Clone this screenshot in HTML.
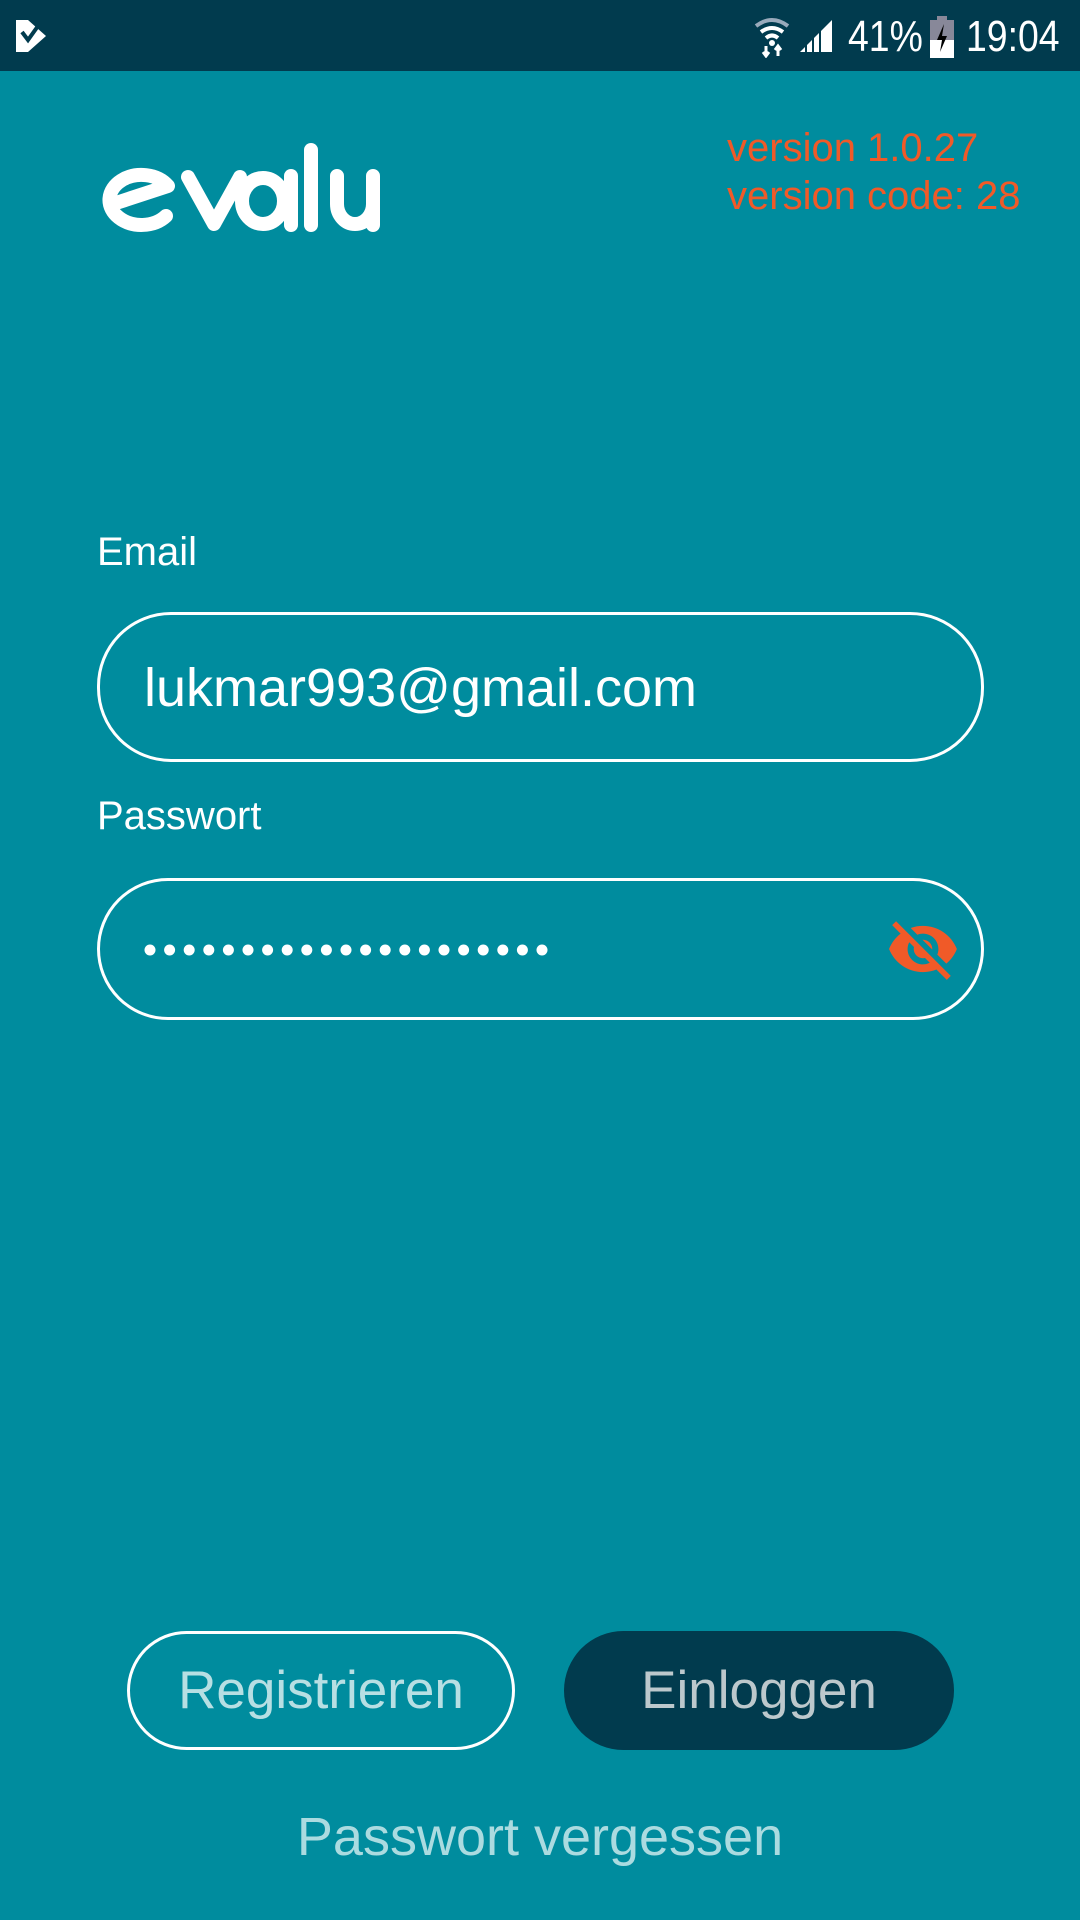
<!DOCTYPE html>
<html><head><meta charset="utf-8"><style>
html,body{margin:0;padding:0;width:1080px;height:1920px;overflow:hidden;background:#008C9E;font-family:"Liberation Sans",sans-serif}
.abs{position:absolute}
.sb{left:0;top:0;width:1080px;height:71px;background:#013B4E}
.lbl{color:#fff;font-size:40px;left:97px}
.field{left:97px;width:887px;border:3px solid #fff;border-radius:74px;box-sizing:border-box}
.btn{top:1631px;height:119px;border-radius:60px;box-sizing:border-box;font-size:53px;display:flex;align-items:center;justify-content:center}
</style></head><body>
<div class="abs sb"></div>
<svg class="abs" style="left:14px;top:18px" width="34" height="36" viewBox="0 0 34 36"><path d="M2 2 L14 2 L32 18 L14 34 L2 34 Z" fill="#fff"/><path d="M8 14 L14 22 L24 8" stroke="#013B4E" stroke-width="4" fill="none"/></svg>
<svg class="abs" style="left:752px;top:16px" width="40" height="42" viewBox="0 0 40 42"><path d="M4 10 Q20 -2 36 10" stroke="#9ab" stroke-width="4" fill="none"/><path d="M9 16 Q20 8 31 16" stroke="#fff" stroke-width="4" fill="none"/><path d="M14 22 Q20 17 26 22" stroke="#fff" stroke-width="4" fill="none"/><circle cx="20" cy="27" r="3" fill="#fff"/><path d="M14 30 V40 M11 36 L14 40 L17 36 M26 40 V30 M23 34 L26 30 L29 34" stroke="#fff" stroke-width="3" fill="none"/></svg>
<svg class="abs" style="left:798px;top:18px" width="36" height="36" viewBox="0 0 36 36"><path d="M2 34 L34 34 L34 2 Z" fill="#fff"/><path d="M8 34V26 M15 34V20 M22 34V13" stroke="#013B4E" stroke-width="2"/></svg>
<div class="abs" style="left:848px;top:12px;color:#fff;font-size:44px;transform:scaleX(.85);transform-origin:left">41%</div>
<svg class="abs" style="left:930px;top:16px" width="24" height="42" viewBox="0 0 24 42"><rect x="7" y="0" width="10" height="4" fill="#889"/><rect x="0" y="4" width="24" height="38" fill="#889"/><rect x="0" y="24" width="24" height="18" fill="#fff"/><path d="M14 8 L7 24 L12 24 L10 36 L17 20 L12 20 Z" fill="#000"/></svg>
<div class="abs" style="left:966px;top:12px;color:#fff;font-size:44px;transform:scaleX(.85);transform-origin:left">19:04</div>

<svg class="abs" style="left:0;top:140px" width="420" height="110" viewBox="0 140 420 110">
<g stroke="#fff" stroke-width="14" fill="none" stroke-linecap="round" stroke-linejoin="round">
<path d="M116 203 L168 186 A32 25 0 1 0 166 216"/>
<path d="M188 177 L214 224 L240 177"/>
<ellipse cx="263" cy="201" rx="21" ry="23"/><path d="M291 176 V225"/>
<path d="M311 150 V225"/>
<path d="M337 176 V204 A18 20 0 0 0 373 204 V176 M373 204 V225"/>
</g></svg>

<div class="abs" style="left:727px;top:124px;color:#F05A28;font-size:40px;line-height:48px;white-space:nowrap">version 1.0.27<br>version code: 28</div>

<div class="abs lbl" style="top:530px">Email</div>
<div class="abs field" style="top:612px;height:150px"></div>
<div class="abs" style="left:144px;top:657px;color:#fff;font-size:54px">lukmar993@gmail.com</div>
<div class="abs lbl" style="top:794px">Passwort</div>
<div class="abs field" style="top:878px;height:142px"></div>
<div class="abs" style="left:144px;top:930px;width:410px;height:40px">
<svg width="410" height="40"><g fill="#fff">
<circle cx="6" cy="20" r="5.5"/><circle cx="25.6" cy="20" r="5.5"/><circle cx="45.2" cy="20" r="5.5"/><circle cx="64.8" cy="20" r="5.5"/><circle cx="84.4" cy="20" r="5.5"/><circle cx="104" cy="20" r="5.5"/><circle cx="123.6" cy="20" r="5.5"/><circle cx="143.2" cy="20" r="5.5"/><circle cx="162.8" cy="20" r="5.5"/><circle cx="182.4" cy="20" r="5.5"/><circle cx="202" cy="20" r="5.5"/><circle cx="221.6" cy="20" r="5.5"/><circle cx="241.2" cy="20" r="5.5"/><circle cx="260.8" cy="20" r="5.5"/><circle cx="280.4" cy="20" r="5.5"/><circle cx="300" cy="20" r="5.5"/><circle cx="319.6" cy="20" r="5.5"/><circle cx="339.2" cy="20" r="5.5"/><circle cx="358.8" cy="20" r="5.5"/><circle cx="378.4" cy="20" r="5.5"/><circle cx="398" cy="20" r="5.5"/></g></svg></div>
<svg class="abs" style="left:886px;top:912px" width="74" height="74" viewBox="0 0 24 24">
<path fill="#F05A28" d="M12 7c2.76 0 5 2.24 5 5 0 .65-.13 1.26-.36 1.830l2.92 2.92c1.51-1.26 2.7-2.89 3.43-4.75-1.730-4.39-6-7.5-11-7.5-1.4 0-2.74.25-3.98.7l2.16 2.16C10.74 7.13 11.35 7 12 7zM2 4.27l2.28 2.28.46.46C3.08 8.3 1.78 10.02 1 12c1.73 4.39 6 7.5 11 7.5 1.55 0 3.03-.3 4.38-.84l.42.42L19.73 22 21 20.73 3.27 3 2 4.27zM7.53 9.8l1.55 1.55c-.05.21-.08.43-.08.65 0 1.66 1.34 3 3 3 .22 0 .44-.03.65-.08l1.55 1.55c-.67.33-1.41.53-2.2.53-2.76 0-5-2.240-5-5 0-.79.2-1.53.53-2.2zm4.31-.78l3.15 3.15.02-.16c0-1.66-1.34-3-3-3l-.17.01z"/>
</svg>

<div class="abs btn" style="left:127px;width:388px;border:3px solid #fff;color:#B7DFE3">Registrieren</div>
<div class="abs btn" style="left:564px;width:390px;background:#013B4E;color:#BCC8CC">Einloggen</div>
<div class="abs" style="left:0;width:1080px;top:1806px;text-align:center;color:#ABDBE0;font-size:54px">Passwort vergessen</div>
</body></html>
